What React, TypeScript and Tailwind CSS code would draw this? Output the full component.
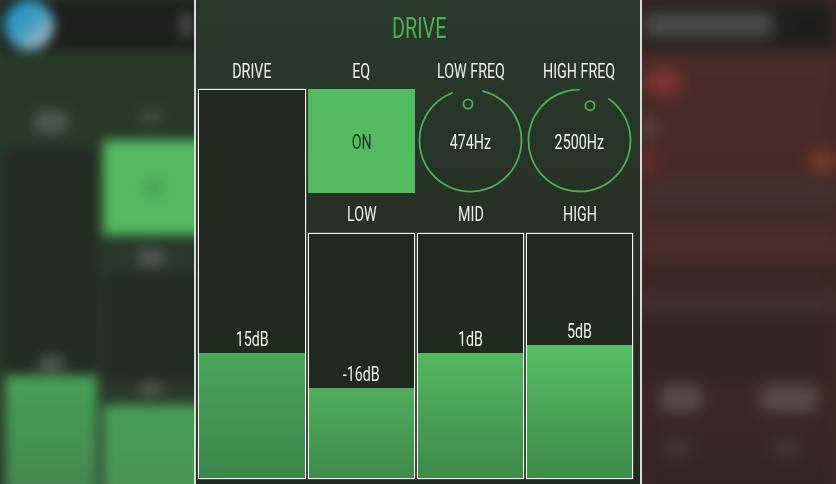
const bars = {
  drive: { value: "15dB", fill: 125, from: "#4aa65a", to: "#3c8549" },
  low: { value: "-16dB", fill: 90, from: "#4fae5c", to: "#3f8a4c" },
  mid: { value: "1dB", fill: 125, from: "#53b860", to: "#3e8a4a" },
  high: { value: "5dB", fill: 133, from: "#56bf63", to: "#3e8a4a" },
};

function Label({ children, className = "" }: { children: string; className?: string }) {
  return (
    <div className={`flex items-center justify-center text-[21px] leading-none text-[#eef1ec] ${className}`}>
      <span className="inline-block scale-x-[0.68] whitespace-nowrap">{children}</span>
    </div>
  );
}

function Slider({ bar, className = "" }: { bar: typeof bars.drive; className?: string }) {
  return (
    <div className={`flex flex-col justify-end border border-[#f2f4f0] bg-[#212921] shadow-[0_0_1px_#dfe4dc] ${className}`}>
      <Label className="h-[28px]">{bar.value}</Label>
      <div
        style={{
          height: bar.fill,
          backgroundImage: `linear-gradient(to bottom, ${bar.from}, ${bar.to})`,
        }}
      />
    </div>
  );
}

function Dial({ arc, dot, value }: { arc: string; dot: [number, number]; value: string }) {
  return (
    <div className="grid h-[104px] place-items-center">
      <svg className="col-start-1 row-start-1 h-[104px] w-[107px]" viewBox="0 0 107 104" fill="none" stroke="#4fae5c" strokeWidth="1.8">
        <path d={arc} strokeLinecap="round" />
        <circle cx={dot[0]} cy={dot[1]} r="4.6" />
      </svg>
      <Label className="col-start-1 row-start-1 pt-[2px]">{value}</Label>
    </div>
  );
}

// blurred neighbour screen on the left
function LeftPanel() {
  return (
    <div className="h-full w-[194px] shrink-0 overflow-hidden bg-[#2a3a2a]">
      <div className="h-[520px] w-[220px] blur-[6px]">
        <div className="flex h-[50px] items-center bg-[#1e1f1e]">
          <div className="ml-[4px] h-[50px] w-[50px] rounded-full bg-gradient-to-br from-[#0f8fc8] via-[#3d9cc0] to-[#c8c8c8]" />
          <div className="ml-[126px] h-[26px] w-[12px] rounded-full bg-[#4a4c4a]" />
        </div>
        <div className="grid h-[470px] grid-cols-[92px_1fr] gap-x-[6px] overflow-hidden bg-gradient-to-b from-[#263826] to-[#2c3a2e] pl-[5px] pt-[60px]">
          <div className="flex flex-col items-center">
            <div className="h-[24px] w-[36px] shrink-0 rounded-full bg-[#4f584f]" />
            <div className="mt-[16px] h-[205px] w-full shrink-0 bg-[#222b22]" />
            <div className="flex h-[20px] w-full shrink-0 justify-center bg-[#222b22]">
              <div className="h-[16px] w-[28px] rounded-full bg-[#4e574e]" />
            </div>
            <div className="h-[145px] w-full shrink-0 bg-gradient-to-b from-[#47a156] to-[#44804e]" />
          </div>
          <div className="flex flex-col items-start">
            <div className="ml-[36px] h-[14px] w-[24px] shrink-0 rounded-full bg-[#3f4f3f]" />
            <div className="mt-[16px] flex h-[95px] w-full shrink-0 items-center bg-[#53ba60] pl-[40px]">
              <div className="h-[16px] w-[20px] rounded-full bg-[#47a052]" />
            </div>
            <div className="ml-[34px] mt-[14px] h-[18px] w-[28px] shrink-0 rounded-full bg-[#4f574f]" />
            <div className="mt-[6px] h-[108px] w-full shrink-0 bg-[#232b23]" />
            <div className="flex h-[24px] w-full shrink-0 pl-[36px]">
              <div className="h-[16px] w-[24px] rounded-full bg-[#4c544c]" />
            </div>
            <div className="h-[105px] w-full shrink-0 bg-gradient-to-b from-[#47a055] to-[#4d8f58]" />
          </div>
        </div>
      </div>
    </div>
  );
}

// blurred neighbour screen on the right
function RightPanel() {
  return (
    <div className="h-full min-w-0 flex-1 overflow-hidden bg-[#452823]">
      <div className="h-[500px] blur-[7px]">
        <div className="flex h-[50px] items-center gap-[20px] bg-[#222222] pl-[4px]">
          <div className="h-[24px] w-[126px] shrink-0 rounded bg-[#4c4c4c]" />
          <div className="h-[30px] w-[34px] shrink-0 bg-[#1d1d1d]" />
          <div className="h-[26px] w-[12px] shrink-0 rounded-full bg-[#4c4c4c]" />
        </div>
        <div className="flex h-[450px] flex-col bg-gradient-to-b from-[#4a2b26] via-[#442925] to-[#322523] pt-[18px]">
          <div className="ml-[2px] h-[28px] w-[38px] shrink-0 rounded-full bg-[#7a3431]" />
          <div className="mt-[20px] h-[24px] w-[14px] shrink-0 rounded-full bg-[#574441]" />
          <div className="mt-[6px] flex h-[30px] shrink-0 items-center justify-between">
            <div className="h-[30px] w-[12px] rounded-full bg-[#68302c]" />
            <div className="h-[26px] w-[26px] rounded-full bg-[#743c2a]" />
          </div>
          <div className="mt-[4px] h-[24px] shrink-0 bg-[#45302f]" />
          <div className="h-[24px] shrink-0 bg-[#412a26]" />
          <div className="h-[30px] shrink-0 bg-[#4c2d2a]" />
          <div className="h-[34px] shrink-0 bg-[#3b2724]" />
          <div className="h-[24px] shrink-0 bg-[#3d2d2c]" />
          <div className="h-[68px] shrink-0 bg-[#342523]" />
          <div className="flex h-[28px] shrink-0">
            <div className="ml-[18px] w-[42px] rounded-lg bg-[#564a48]" />
            <div className="ml-[58px] w-[58px] rounded-lg bg-[#564a48]" />
          </div>
          <div className="mt-[26px] flex h-[20px] shrink-0">
            <div className="ml-[22px] w-[28px] rounded-lg bg-[#403433]" />
            <div className="ml-[80px] w-[28px] rounded-lg bg-[#403433]" />
          </div>
        </div>
      </div>
    </div>
  );
}

export default function App() {
  return (
    <div className="flex h-[484px] w-[836px] overflow-hidden bg-[#222222] font-['Roboto',sans-serif]">
      <LeftPanel />
      <div className="flex h-full w-[448px] shrink-0 flex-col border-x-2 border-[#d8dcd6] bg-gradient-to-b from-[#2a3a2a] to-[#212821] pl-[2px]">
        <div className="flex h-[56px] items-center justify-center text-[30px] leading-none text-[#4fae5c]">
          <span className="inline-block scale-x-[0.66]">DRIVE</span>
        </div>
        <div className="grid grid-cols-[108px_107px_107px_107px] grid-rows-[33px_104px_40px_246px] gap-x-[2px]">
          <Label className="pb-[2px]">DRIVE</Label>
          <Label className="pb-[2px]">EQ</Label>
          <Label className="pb-[2px]">LOW FREQ</Label>
          <Label className="pb-[2px]">HIGH FREQ</Label>
          <Slider bar={bars.drive} className="row-span-3" />
          <div className="flex items-center justify-center bg-[#53ba60] pt-[2px] text-[21px] leading-none text-[#17381d]">
            <span className="inline-block scale-x-[0.68]">ON</span>
          </div>
          <Dial arc="M35 4 A51 51 0 1 0 66 2.1" dot={[51, 15]} value="474Hz" />
          <Dial arc="M53 0.5 A51 51 0 1 0 83 9.9" dot={[64, 16.7]} value="2500Hz" />
          <Label className="pt-[3px]">LOW</Label>
          <Label className="pt-[3px]">MID</Label>
          <Label className="pt-[3px]">HIGH</Label>
          <Slider bar={bars.low} />
          <Slider bar={bars.mid} />
          <Slider bar={bars.high} />
        </div>
      </div>
      <RightPanel />
    </div>
  );
}
